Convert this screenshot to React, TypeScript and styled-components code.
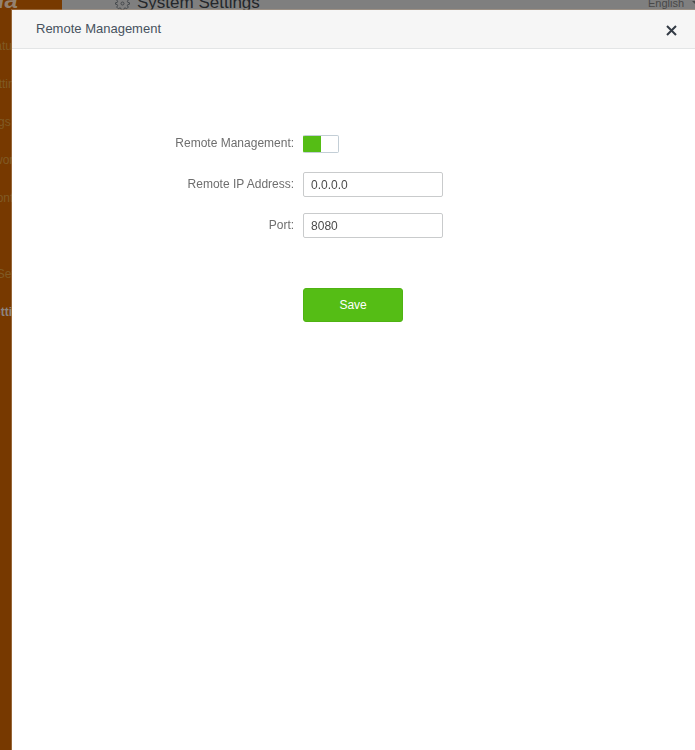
import React, { useState } from "react";
import styled, { createGlobalStyle } from "styled-components";

const GlobalStyle = createGlobalStyle`
  * { box-sizing: border-box; }
  html, body, #root { height: 100%; }
  body {
    margin: 0;
    overflow: hidden;
    background: #7f7f7f;
    font-family: "Liberation Sans", Arial, sans-serif;
    font-size: 12px;
    color: #6e6e6e;
  }
  input, button { font-family: inherit; font-size: inherit; }
`;

const Page = styled.div`
  display: flex;
  min-height: 100%;
`;

const Sidebar = styled.aside`
  flex: none;
  width: 200px;
  margin-left: -138px;
  padding-left: 78px;
  background: #773900;
`;

const Logo = styled.div`
  height: 26px;
  margin-top: -13px;
  padding-left: 8px;
  font-size: 24px;
  line-height: 26px;
  font-weight: bold;
  font-style: italic;
  color: #94816f;
`;

const Menu = styled.nav`
  display: flex;
  flex-direction: column;
  padding-top: 14px;
`;

const MenuLink = styled.a<{ $active?: boolean }>`
  height: 38px;
  line-height: 38px;
  white-space: nowrap;
  text-decoration: none;
  font-weight: ${(p) => (p.$active ? "bold" : "normal")};
  color: ${(p) => (p.$active ? "#8d8580" : "#805a24")};
`;

const PageHeader = styled.header`
  flex: 1;
  display: flex;
  align-items: center;
  height: 26px;
  margin-top: -10px;
  padding-left: 53px;
`;

const PageTitle = styled.h1`
  flex: 1;
  margin: 0 0 0 7px;
  font-size: 17px;
  font-weight: normal;
  line-height: 26px;
  color: #24272b;
`;

const Language = styled.button`
  display: flex;
  align-items: center;
  gap: 8px;
  margin-right: -5px;
  padding: 0;
  border: 0;
  background: none;
  font-size: 11px;
  line-height: 26px;
  color: #484848;
`;

const Dialog = styled.section`
  position: fixed;
  inset: 10px 0 0 12px;
  background: #fff;
  box-shadow: 0 0 0 1px rgba(200, 170, 140, 0.4);
`;

const DialogHeader = styled.header`
  display: flex;
  align-items: center;
  justify-content: space-between;
  height: 39px;
  padding: 0 16px 0 24px;
  background: #f6f6f6;
  border-bottom: 1px solid #e3e5e6;
`;

const DialogTitle = styled.h2`
  margin: 0;
  font-size: 13px;
  font-weight: normal;
  line-height: 36px;
  color: #46525e;
`;

const CloseButton = styled.button`
  display: flex;
  padding: 2px 0 0;
  border: 0;
  background: none;
  color: #333b45;
`;

const Form = styled.form`
  display: grid;
  grid-template-columns: 41.3% 140px;
  column-gap: 9px;
  row-gap: 16px;
  align-items: center;
  padding-top: 82px;
`;

const Label = styled.label`
  height: 25px;
  line-height: 24px;
  text-align: right;
  white-space: nowrap;
`;

const TextInput = styled.input`
  width: 100%;
  height: 25px;
  padding: 0 7px;
  border: 1px solid #c9cbcc;
  border-radius: 2px;
  background: #fff;
  color: #4a4a4a;
`;

const Switch = styled.input`
  appearance: none;
  width: 36px;
  height: 18px;
  margin: 0;
  border: 1px solid #c3ced6;
  border-radius: 2px;
  background: linear-gradient(#55bd15, #55bd15) left / 17px 100% no-repeat #fff;

  &:checked { border-left-color: #55bd15; }
  &:not(:checked) { background-position: right; background-image: linear-gradient(#ccc, #ccc); }
`;

const SaveButton = styled.button`
  grid-column: 2;
  width: 100px;
  height: 34px;
  margin-top: 34px;
  border: 1px solid #4fb313;
  border-radius: 3px;
  background: #55bd15;
  color: #fff;
`;

const menu = [
  "Internet Status",
  "Internet Settings",
  "WiFi Settings",
  "Guest Network",
  "Parental Controls",
  "VPN",
  "Advanced Settings",
  "System Settings",
];

const GearIcon = () => (
  <svg width="15" height="15" viewBox="0 0 15 15" fill="none" stroke="#44484c" aria-hidden="true">
    <circle cx="7.5" cy="7.5" r="1.500" />
    <path d="M6.3 1h2.4l.4 1.7 1 .4 1.5-.9 1.7 1.7-.9 1.5.4 1 1.7.4v1.4l-1.7.4-.4 1 .9 1.5-1.7 1.700-1.500-.9-1 .4-.4 1.700H6.300l-.4-1.700-1-.4-1.500.9-1.700-1.700.9-1.500-.4-1L.5 8.200V6.800l1.700-.4.4-1-.9-1.500 1.700-1.700 1.500.9 1-.4z" />
  </svg>
);

const CloseIcon = () => (
  <svg width="15" height="15" viewBox="0 0 15 15" stroke="currentColor" strokeWidth="2" aria-hidden="true">
    <path d="M3 3l9 9M12 3l-9 9" />
  </svg>
);

export default function App() {
  const [enabled, setEnabled] = useState(true);
  const [address, setAddress] = useState("0.0.0.0");
  const [port, setPort] = useState("8080");

  return (
    <>
      <GlobalStyle />
      <Page>
        <Sidebar>
          <Logo>Tenda</Logo>
          <Menu>
            {menu.map((item) => (
              <MenuLink key={item} href="#" $active={item === "System Settings"}>
                {item}
              </MenuLink>
            ))}
          </Menu>
        </Sidebar>
        <PageHeader>
          <GearIcon />
          <PageTitle>System Settings</PageTitle>
          <Language type="button">
            English
            <svg width="8" height="4" viewBox="0 0 8 4" fill="currentColor" aria-hidden="true">
              <path d="M0 0h8L4 4z" />
            </svg>
          </Language>
        </PageHeader>
      </Page>
      <Dialog role="dialog" aria-labelledby="dialog-title">
        <DialogHeader>
          <DialogTitle id="dialog-title">Remote Management</DialogTitle>
          <CloseButton type="button" aria-label="Close">
            <CloseIcon />
          </CloseButton>
        </DialogHeader>
        <Form onSubmit={(e) => e.preventDefault()}>
          <Label htmlFor="enabled">Remote Management:</Label>
          <Switch
            id="enabled"
            type="checkbox"
            role="switch"
            checked={enabled}
            onChange={(e) => setEnabled(e.target.checked)}
          />
          <Label htmlFor="address">Remote IP Address:</Label>
          <TextInput id="address" value={address} onChange={(e) => setAddress(e.target.value)} />
          <Label htmlFor="port">Port:</Label>
          <TextInput id="port" value={port} onChange={(e) => setPort(e.target.value)} />
          <SaveButton type="submit">Save</SaveButton>
        </Form>
      </Dialog>
    </>
  );
}
